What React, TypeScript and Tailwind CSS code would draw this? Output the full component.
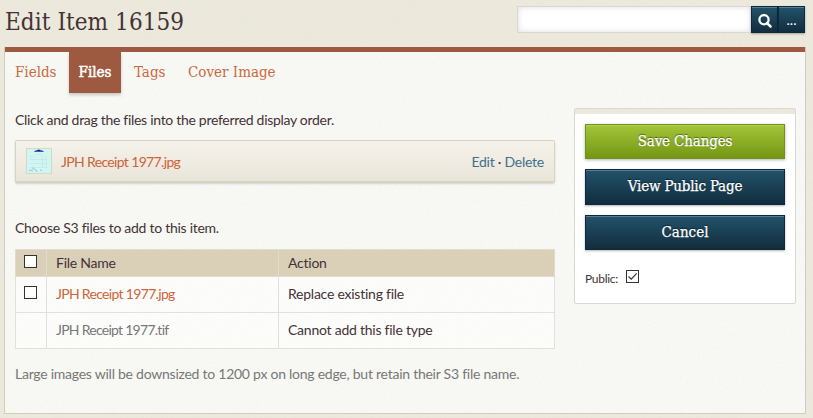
import React from "react";

const slab = "[font-family:'DejaVu_Serif_Condensed','DejaVu_Serif',serif] [font-stretch:75%]";
const blueButton =
  "border border-[#0d2a3c] bg-gradient-to-b from-[#22536b] to-[#122d3e] shadow-[inset_0_1px_0_rgba(255,255,255,0.25),0_1px_2px_rgba(0,0,0,0.3)]";
const buttonText =
  "flex w-full items-center justify-center pb-[2px] text-[15px] text-white [-webkit-text-stroke:0.25px_white] [text-shadow:0_-1px_1px_rgba(0,0,0,0.5)]";

function Texture({ id }: { id: string }) {
  return (
    <svg className="pointer-events-none absolute inset-0 h-full w-full opacity-[0.06]" aria-hidden="true">
      <filter id={id}>
        <feTurbulence type="fractalNoise" baseFrequency="0.45" numOctaves="3" />
        <feColorMatrix type="saturate" values="0" />
      </filter>
      <rect width="100%" height="100%" filter={"url(#" + id + ")"} />
    </svg>
  );
}

function Box({ checked = false }: { checked?: boolean }) {
  return (
    <span className="block h-[13px] w-[13px] shrink-0 border border-[#333] bg-white">
      {checked && (
        <svg viewBox="0 0 11 11" className="block h-[11px] w-[11px]">
          <path d="M1.5 5.5 4.2 8.2 9.7 2.3" fill="none" stroke="#333" strokeWidth="1.2" />
        </svg>
      )}
    </span>
  );
}

function Thumbnail() {
  return (
    <svg viewBox="0 0 26 26" className="h-[26px] w-[26px]">
      <rect x=".5" y=".5" width="25" height="25" fill="#d1f5f3" stroke="#cfdcc5" />
      <path d="M8 3.800Q8.500 2.500 11 2.200q2-1.500 3.500 0 3 .2 3.500 1.600Z" fill="#152796" />
      <path d="M9 6.500h7M4 8.500h4M4 11.500h17M4 15.500h17M16.500 8v12M20.500 8v12M4 19.500h17" stroke="#b9e2e4" strokeWidth=".5" fill="none" />
      <path d="m3 23 2-1 2 1m1-2 2 1 1 2m3-2 2 .5M6 20l2 .5" stroke="#8db8d0" strokeWidth=".8" fill="none" />
    </svg>
  );
}

export default function App() {
  return (
    <div className="relative h-[418px] w-[813px] overflow-hidden bg-[#edeadd] text-[14px] leading-5 text-[#443237] [font-family:Lato,sans-serif]">
      <Texture id="paper" />
      <div className="relative flex h-full flex-col pl-1 pr-[7px]">
        <header className="flex h-[47px] shrink-0 justify-between pt-1.5 pr-px">
          <h1 className={`${slab} pl-px text-[24px] leading-8 tracking-[0.08px] whitespace-nowrap`}>Edit Item 16159</h1>
          <form className="flex h-[27px]">
            <input
              aria-label="Search"
              className="w-[234px] border border-r-0 border-[#d8d8d2] bg-white shadow-[inset_0_0_6px_#ddd] outline-none"
            />
            <button type="button" aria-label="Search" className={`${blueButton} flex w-[27px] items-center justify-center pt-[2px]`}>
              <svg viewBox="0 0 14 14" className="h-[14px] w-[14px]">
                <circle cx="6" cy="5.700" r="4.600" fill="none" stroke="white" strokeWidth="2.300" />
                <path d="m9 9 3.500 3.500" stroke="white" strokeWidth="2.500" strokeLinecap="round" />
              </svg>
            </button>
            <button type="button" className={`${blueButton} flex w-[27px] items-center justify-center text-white`}>
              ...
            </button>
          </form>
        </header>
        <main className="relative h-[367px] border border-t-0 border-[#cfcdc2] bg-[#f9faf5]">
          <Texture id="panel" />
          <div className="relative h-full">
            <div className="h-[5px] bg-[#9d5a41]" />
            <nav className={`${slab} flex h-[41px] text-[15px] leading-[41px] text-[#cb6841]`}>
              <a className="w-[64px] pl-[10px]">Fields</a>
              <a className="w-[52px] bg-[#9d5a41] text-center text-white shadow-[0_2px_3px_rgba(0,0,0,0.2)] [-webkit-text-stroke:0.5px_white]">Files</a>
              <a className="w-[54px] pl-[13px]">Tags</a>
              <a className="pl-[13px] whitespace-nowrap">Cover Image</a>
            </nav>
            <div className="flex pl-[10px]">
              <section className="w-[540px] pt-[17px]">
                <p className="tracking-[-0.3px]">Click and drag the files into the preferred display order.</p>
                <div className="mt-[10px] flex h-[43px] items-center rounded-[2px] border border-b-2 border-[#d5d4bd] bg-gradient-to-b from-[#f5f2eb] to-[#eae5da] px-[10px] shadow-[0_1px_2px_rgba(0,0,0,0.15)]">
                  <Thumbnail />
                  <a className="ml-[9px] pt-px tracking-[-0.65px] text-[#cb6438]">JPH Receipt 1977.jpg</a>
                  <span className="ml-auto pt-px tracking-[-0.25px] text-[#40708b]">
                    Edit <span className="text-[#443237]">·</span> Delete
                  </span>
                </div>
                <p className="mt-[35px] tracking-[-0.27px]">Choose S3 files to add to this item.</p>
                <table className="mt-[11px] w-full table-fixed border-collapse text-left tracking-[-0.24px] [&_td]:border [&_td]:border-[#e0e1dc] [&_td]:bg-white/60 [&_td]:p-0 [&_td]:pb-[2px] [&_td]:pl-[9px] [&_th]:border [&_th]:border-[#e0dccb] [&_th]:bg-[#d9d0b7] [&_th]:p-0 [&_th]:pl-[9px] [&_th]:font-normal">
                  <colgroup>
                    <col className="w-[31px]" />
                    <col className="w-[232px]" />
                    <col />
                  </colgroup>
                  <thead>
                    <tr className="h-[27px]">
                      <th className="pb-[3px]! pl-[8px]!"><Box /></th>
                      <th>File Name</th>
                      <th>Action</th>
                    </tr>
                  </thead>
                  <tbody>
                    <tr className="h-[36px]">
                      <td className="pb-[5px]! pl-[8px]!"><Box /></td>
                      <td className="tracking-[-0.68px] text-[#cb6438]">JPH Receipt 1977.jpg</td>
                      <td>Replace existing file</td>
                    </tr>
                    <tr className="h-[36px]">
                      <td />
                      <td className="tracking-[-0.73px] text-[#777]">JPH Receipt 1977.tif</td>
                      <td>Cannot add this file type</td>
                    </tr>
                  </tbody>
                </table>
                <p className="mt-[15px] whitespace-nowrap tracking-[-0.25px] text-[#777]">
                  Large images will be downsized to 1200 px on long edge, but retain their S3 file name.
                </p>
              </section>
              <aside className="mt-[15px] ml-[19px] h-[196px] w-[222px] rounded-[2px] border border-[#d8d9d4] bg-white">
                <div className="h-[5px] bg-[#ebe9dc]" />
                <div className={`${slab} flex flex-col gap-[10px] px-[10px] pt-[10px]`}>
                  <button className={`${buttonText} h-[35px] border border-[#759018] bg-gradient-to-b from-[#a4c639] to-[#749611] tracking-[-0.15px] shadow-[inset_0_1px_0_rgba(255,255,255,0.15),0_1px_3px_rgba(0,0,0,0.3)]`}>Save Changes</button>
                  <button className={`${buttonText} ${blueButton} h-[36px] tracking-[-0.2px]`}>View Public Page</button>
                  <button className={`${buttonText} ${blueButton} h-[35px]`}>Cancel</button>
                </div>
                <label className="mt-[20px] flex h-5 items-start pl-[10px] text-[12px]">
                  <span className="-mt-px w-[41px] tracking-[-0.3px]">Public:</span>
                  <Box checked />
                </label>
              </aside>
            </div>
          </div>
        </main>
      </div>
    </div>
  );
}
